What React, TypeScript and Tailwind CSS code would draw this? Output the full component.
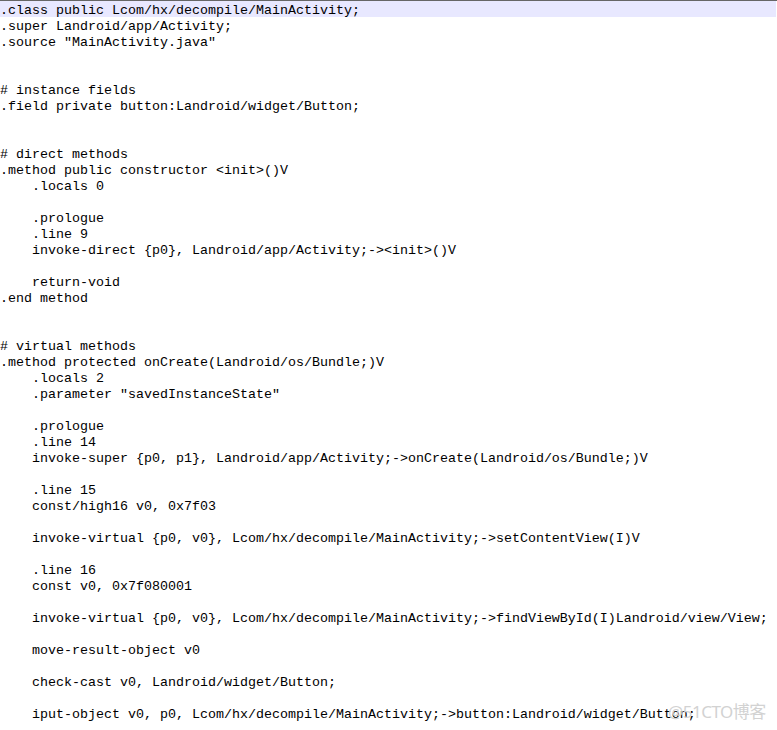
const lines = [
  ".class public Lcom/hx/decompile/MainActivity;",
  ".super Landroid/app/Activity;",
  '.source "MainActivity.java"',
  "",
  "",
  "# instance fields",
  ".field private button:Landroid/widget/Button;",
  "",
  "",
  "# direct methods",
  ".method public constructor <init>()V",
  "    .locals 0",
  "",
  "    .prologue",
  "    .line 9",
  "    invoke-direct {p0}, Landroid/app/Activity;-><init>()V",
  "",
  "    return-void",
  ".end method",
  "",
  "",
  "# virtual methods",
  ".method protected onCreate(Landroid/os/Bundle;)V",
  "    .locals 2",
  '    .parameter "savedInstanceState"',
  "",
  "    .prologue",
  "    .line 14",
  "    invoke-super {p0, p1}, Landroid/app/Activity;->onCreate(Landroid/os/Bundle;)V",
  "",
  "    .line 15",
  "    const/high16 v0, 0x7f03",
  "",
  "    invoke-virtual {p0, v0}, Lcom/hx/decompile/MainActivity;->setContentView(I)V",
  "",
  "    .line 16",
  "    const v0, 0x7f080001",
  "",
  "    invoke-virtual {p0, v0}, Lcom/hx/decompile/MainActivity;->findViewById(I)Landroid/view/View;",
  "",
  "    move-result-object v0",
  "",
  "    check-cast v0, Landroid/widget/Button;",
  "",
  "    iput-object v0, p0, Lcom/hx/decompile/MainActivity;->button:Landroid/widget/Button;",
  "",
];

function App() {
  return (
    <div className="relative w-[777px] h-[730px] overflow-hidden bg-white border-t border-[#666666]">
      <div className="font-['Liberation_Mono',monospace] text-[13.33px] text-black">
        {lines.map((line, i) => (
          <div
            key={i}
            className={
              i === 0
                ? "h-4 leading-[19px] whitespace-pre bg-[#e8e8ff] w-[776px]"
                : "h-4 leading-[19px] whitespace-pre"
            }
          >
            {line}
          </div>
        ))}
      </div>
      <span className="absolute left-[668px] top-[701px] text-[17px] text-[#d2d2d2] font-['Noto_Sans','Noto_Sans_CJK_SC',sans-serif] leading-5 tracking-[-0.5px]">
        @51CTO博客
      </span>
    </div>
  );
}

export default App;
